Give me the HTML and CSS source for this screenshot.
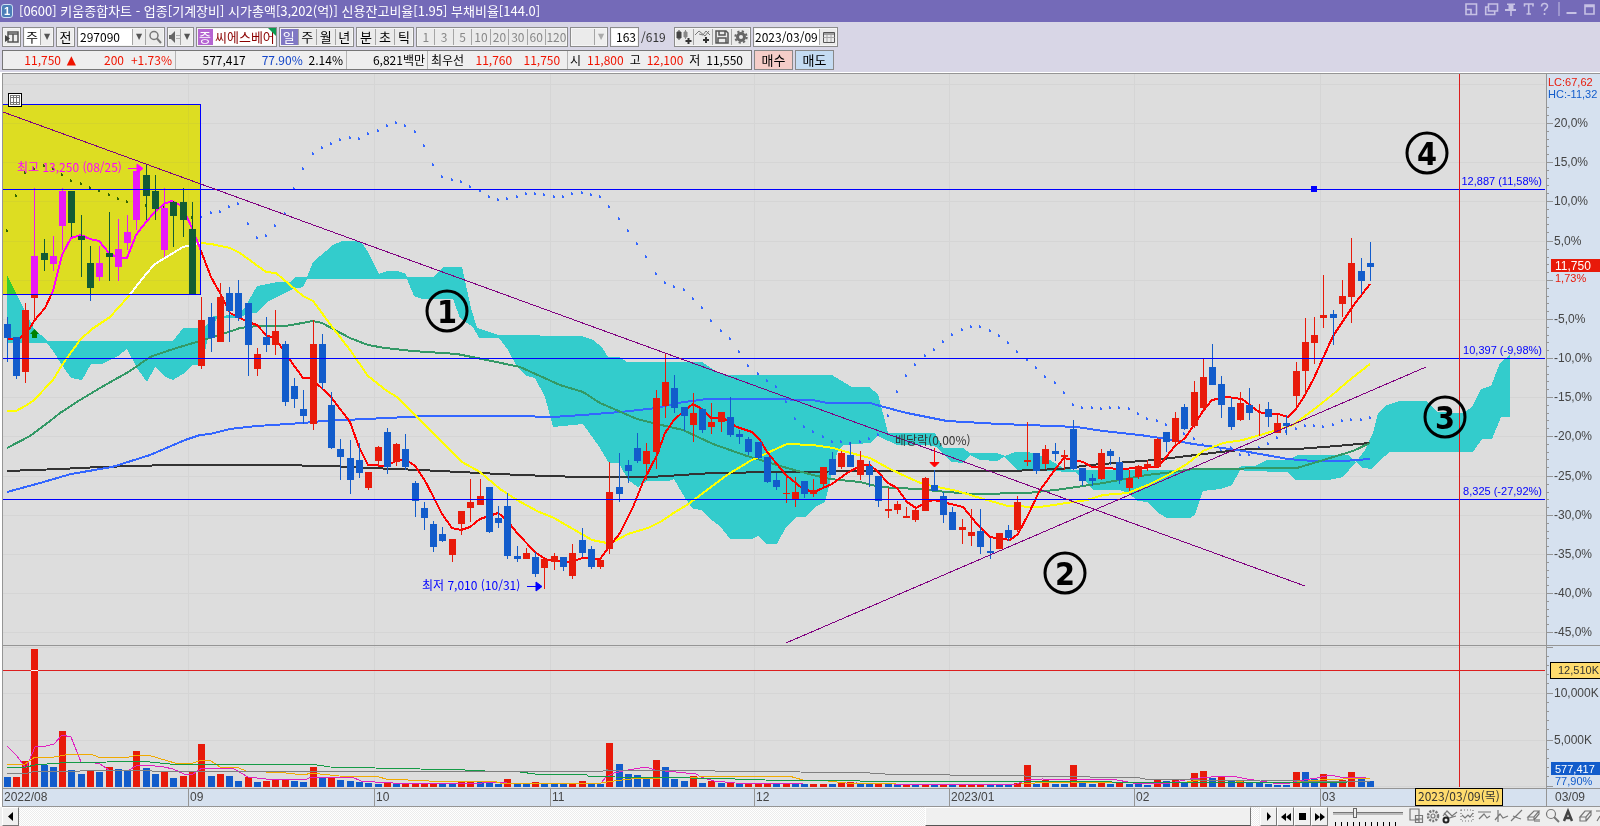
FILE: index.html
```html
<!DOCTYPE html>
<html lang="ko">
<head>
<meta charset="utf-8">
<title>키움종합차트</title>
<link rel="stylesheet" href="styles.css">
</head>
<body>
<header class="titlebar">
  <span class="badge">1</span>
  <h1 class="title">[0600] 키움종합차트 - 업종[기계장비] 시가총액[3,202(억)] 신용잔고비율[1.95] 부채비율[144.0]</h1>
  <svg class="winicons" width="140" height="22" viewBox="0 0 140 22" fill="none" stroke="#c6c1e4" stroke-width="1.6" aria-hidden="true">
    <path d="M6 4h10.500v10.500h-10.500zM6 9.500h5v5"/>
    <path d="M28.500 4h9v7h-9zM28.500 7h-2.800v7.500h9v-3"/>
    <path d="M47 3.500h8v1.500h-1.500v4h2.500v2h-11v-2h3.500v-4h-1.500z" fill="#c6c1e4" stroke="none"/><path d="M51 11v5"/>
    <path d="M64.500 6.500v-2.500h8.500v2.500M68.700 4v10M66.500 14h4.500"/>
    <path d="M81.500 6.500c0-4 6-4 6-.5 0 3-3 2-3 5M84.500 13v2"/>
    <path d="M99 2v14" stroke-width="1"/>
    <path d="M106.500 13h10" stroke-width="2"/>
    <path d="M125 5h9v9h-9zM125 6.500h9"/>
  </svg>
</header>

<form class="toolbar">
  <button class="btn" type="button" aria-label="창"><svg width="14" height="14" viewBox="0 0 14 14"><path d="M3 2h10v10H3zM3 4h10M8 4v8" fill="none" stroke="#555" stroke-width="1.500"/><path d="M0 5v7l5-3.500z" fill="#444"/></svg></button>
  <span class="group mark"><button class="cell white" type="button">주</button><button class="arrow" type="button" aria-label="종목 구분">▼</button></span>
  <button class="btn" type="button">전</button>
  <span class="group code"><input class="field" aria-label="종목코드" value="297090"><button class="arrow" type="button" aria-label="목록">▼</button><button class="cell" type="button" aria-label="검색"><svg width="14" height="14" viewBox="0 0 14 14" fill="none" stroke="#777" stroke-width="1.500"><circle cx="6" cy="5.500" r="4"/><path d="M9 8.500l4 4.500" stroke-width="2"/></svg></button></span>
  <span class="group sound"><button class="cell" type="button" aria-label="소리"><svg width="12" height="12" viewBox="0 0 12 12"><path d="M0 4h3l4-4v12l-4-4H0z" fill="#666"/><path d="M9 4v1M9 7v1M11 4v1M11 7v1" stroke="#777"/></svg></button><button class="arrow" type="button" aria-label="소리 설정">▼</button></span>
  <span class="group stock"><b class="tag">증</b><span class="name">씨에스베어</span></span>
  <span class="group period"><button class="cell on" type="button">일</button><button class="cell" type="button">주</button><button class="cell" type="button">월</button><button class="cell" type="button">년</button></span>
  <span class="group unit"><button class="cell" type="button">분</button><button class="cell" type="button">초</button><button class="cell" type="button">틱</button></span>
  <span class="group mins"><button class="cell" type="button">1</button><button class="cell" type="button">3</button><button class="cell" type="button">5</button><button class="cell" type="button">10</button><button class="cell" type="button">20</button><button class="cell" type="button">30</button><button class="cell" type="button">60</button><button class="cell" type="button">120</button></span>
  <span class="group blank"><span class="cell"></span><button class="arrow off" type="button" aria-label="주기">▼</button></span>
  <span class="group count"><input class="field right" aria-label="봉 개수" value="163"></span>
  <span class="total">/619</span>
  <span class="group tools">
    <button class="cell" type="button" aria-label="차트 추가"><svg width="16" height="14" viewBox="0 0 16 14"><path d="M1 2h4v6H1zM3 0v10" fill="#444" stroke="#444"/><path d="M8 2h3v5H8zM9.500 0v9" fill="#888" stroke="#888"/><path d="M12.500 8v6M9.500 11h6" stroke="#333" stroke-width="2"/></svg></button><button class="cell" type="button" aria-label="지표 추가"><svg width="16" height="14" viewBox="0 0 16 14" fill="none"><path d="M0 5l4-4 6 5 4-5M4 4l4 1 3-4 4 4" stroke="#777"/><path d="M11 7v6M8 10h6" stroke="#333" stroke-width="2"/></svg></button><button class="cell" type="button" aria-label="저장"><svg width="14" height="14" viewBox="0 0 14 14" fill="none" stroke="#555" stroke-width="1.500"><path d="M1 1h10l2 2v10H1zM4 1v4h6V1M3 13V8h8v5"/></svg></button><button class="cell" type="button" aria-label="설정"><svg width="14" height="14" viewBox="0 0 14 14" fill="none" stroke="#666"><circle cx="7" cy="7" r="3.500" stroke-width="3"/><circle cx="7" cy="7" r="5.700" stroke-width="2" stroke-dasharray="2.200 2.280"/></svg></button>
  </span>
  <span class="group date"><input class="field" aria-label="날짜" value="2023/03/09"><button class="cell" type="button" aria-label="달력"><svg width="12" height="12" viewBox="0 0 12 12" fill="none" stroke="#555"><path d="M.5 1.500h11v10H.5zM.5 3h11" /><path d="M.5 6.500h11M4 4v7M8 4v7" stroke="#aaa"/></svg></button></span>
</form>

<section class="quotes">
  <div class="quote">
    <div class="seg seg-a"><span class="up w60">11,750</span><span class="up tri">▲</span><span class="up w48">200</span><span class="up w48">+1.73%</span></div>
    <div class="seg seg-b"><span class="w68">577,417</span><span class="down w60">77.90%</span><span class="w40">2.14%</span></div>
    <div class="seg seg-c"><span>6,821백만</span></div>
    <div class="seg seg-d"><span>최우선</span><span class="up w48">11,760</span><span class="up w48">11,750</span></div>
    <div class="seg seg-e"><span>시</span><span class="up">11,800</span><span>고</span><span class="up">12,100</span><span>저</span><span>11,550</span></div>
  </div>
  <button class="trade buy" type="button">매수</button>
  <button class="trade sell" type="button">매도</button>
</section>

<main class="chart">
  <svg class="plot" viewBox="0 73 1600 734" role="img" aria-label="씨에스베어링 일봉 차트">
    <rect x="0" y="73" width="1600" height="734" fill="#fff"/>
    <rect x="2" y="73" width="1544" height="715" fill="#ddd"/>
    <rect x="1546" y="73" width="54" height="734" fill="#d6e1ef"/>
    <rect x="2" y="788" width="1544" height="18" fill="#d6e1ef"/>
    <g id="grid" class="crisp"></g>
    <g id="cloud" class="crisp"></g>
    <g id="dots" class="crisp"></g>
    <g id="averages" class="line"></g>
    <g id="candles" class="crisp"></g>
    <text x="17" y="172" class="t" fill="#f00">최고 13,250 (08/25)</text>
    <path d="M128 168.500h10M137 164v9l6-4.500z" fill="#f00" stroke="#f00"/>
    <rect class="highlight" x="3" y="104" width="197" height="190"/>
    <path class="crisp" d="M3 104.500h197.500v190h-197.500" fill="none" stroke="#00f"/>
    <path d="M30 334l4.500-5 4.500 5h-2v4h-5v-4z" fill="#008000"/>
    <path class="crisp" d="M3 189.500h1542M3 358.500h1542M3 499.500h1542" stroke="#00f"/>
    <path class="line" d="M3 112L1305 586M786 643L1426 367" fill="none" stroke="#800080"/>
    <path d="M1311 186h6v6h-6z" fill="#00f"/>
    <g class="crisp"><path d="M8.500 93.500h13v13h-13z" fill="#fff" stroke="#000"/><path d="M10.500 95.500h9v9h-9zM10.500 97.500h9M10.500 102.500h9M13.500 95v9M16.500 95v9" fill="none" stroke="#777"/></g>
    <text x="422" y="590" class="t" fill="#00f">최저 7,010 (10/31)</text>
    <path d="M527 586.500h10M536 582v9l6-4.500z" fill="#00f" stroke="#00f"/>
    <text x="895" y="445" class="t" fill="#333">배당락(0,00%)</text>
    <path d="M934.500 448v15M930 462.500h9l-4.500 4.500z" fill="#f00" stroke="#f00"/>
    <g class="n" fill="#00f" text-anchor="end"><text x="1542" y="185">12,887 (11,58%)</text><text x="1542" y="354">10,397 (-9,98%)</text><text x="1542" y="495">8,325 (-27,92%)</text></g>
    <g id="volume" class="crisp"></g>
    <g id="volumeAverages" class="thin"></g>
    <g class="crisp"><path d="M2 645.500h1598M2.500 73v733M2 788.500h1598M2 806.500h1598M1546.500 73v733M2 73.500h1598" stroke="#959595" fill="none"/>
    <path d="M3 670.500h1542M1459.500 74v713" stroke="#dc1e1e"/><path d="M31 670.500h7" stroke="#fff"/></g>
    <g class="mark-no"><circle cx="447" cy="311" r="20"/><text x="447" y="323">1</text><circle cx="1065" cy="573" r="20"/><text x="1065" y="585">2</text><circle cx="1445" cy="417" r="20"/><text x="1445" y="429">3</text><circle cx="1427" cy="153" r="20"/><text x="1427" y="165">4</text></g>
    <g id="axis" class="a" fill="#444"></g>
    <text x="1548" y="86" class="n" fill="#e81a0a">LC:67,62</text>
    <text x="1548" y="98" class="n" fill="#125ccb">HC:-11,32</text>
    <text x="1555" y="282" class="n" fill="#e81a0a">1,73%</text>
    <rect x="1551" y="259" width="49" height="13" fill="#e81a0a"/><text x="1555" y="270" class="a" fill="#fff">11,750</text>
    <text x="1555" y="785" class="n" fill="#125ccb">77,90%</text>
    <rect x="1551" y="762" width="49" height="13" fill="#125ccb"/><text x="1555" y="773" class="n" fill="#fff">577,417</text>
    <rect class="crisp" x="1550.500" y="662.500" width="60" height="16" fill="#ffdc6e" stroke="#000"/><text x="1558" y="674" class="n" fill="#333">12,510K</text>
    <rect class="crisp" x="1415.500" y="788.500" width="87" height="17" fill="#ffdc6e" stroke="#000"/><text x="1418" y="801" class="t" fill="#333">2023/03/09(목)</text>
  </svg>
</main>

<footer class="bottom">
  <button class="sb" type="button" aria-label="왼쪽"><svg width="8" height="9"><path d="M6 0v9L1 4.500z"/></svg></button>
  <div class="track"><div class="thumb"></div></div>
  <button class="sb" type="button" aria-label="오른쪽"><svg width="8" height="9"><path d="M2 0v9l4-4.500z"/></svg></button><button class="sb" type="button" aria-label="뒤로"><svg width="10" height="8"><path d="M5 0v8L0 4zM10 0v8L5 4z"/></svg></button><button class="sb" type="button" aria-label="정지"><svg width="7" height="7"><path d="M0 0h7v7H0z"/></svg></button><button class="sb" type="button" aria-label="앞으로"><svg width="10" height="8"><path d="M0 0v8l5-4zM5 0v8l5-4z"/></svg></button>
  <div class="slide"><input type="range" min="0" max="10" value="3" aria-label="확대"></div>
  <svg class="drawtools" width="192" height="19" viewBox="0 0 192 19" fill="none" stroke="#777" stroke-width="1.200" aria-hidden="true">
    <path d="M2 2h9v11H2zM7.500 8.500h7v7h-7zM11 8.500v7M7.500 12h7" />
    <circle cx="25" cy="9" r="5" stroke-width="2.500" stroke-dasharray="2 1.200"/><circle cx="25" cy="9" r="2"/>
    <path d="M35 9l4-5 5 5 5-4M36 6l5 5 7-2"/><circle cx="38" cy="13" r="2.500" stroke="#222" stroke-width="2"/>
    <path d="M53 3h12v11H53z" stroke-dasharray="1 2"/><path d="M54 8l3 3 3-3 2 2 3-4"/>
    <path d="M70 5h13M71 12l5-5 3 4 3-2"/>
    <path d="M90 3v12M87 13l5-6 3 4 5-2"/>
    <path d="M103 14l11-11M105 9l5 2 3 1"/>
    <path d="M120 10l6-6h5l-5 6zM120 10v3h6v-3M126 13l5-6v-3M127 12v3M129 12v3M131 12v3"/>
    <circle cx="143" cy="7" r="4.500"/><path d="M146 10l5 5" stroke-width="2"/>
    <path d="M156 14l4-10 4 10M157.500 11h5" stroke="#444" stroke-width="2.500"/>
    <path d="M172 10l5-6h6l-5 6zM172 10v4h6v-4M178 14l5-6v-4"/>
    <path d="M188 4h4M192 9l-3 5"/>
  </svg>
</footer>
<script src="chart.js"></script>
</body>
</html>
```
FILE: styles.css
```css
* { box-sizing: border-box; }
body {
  margin: 0;
  min-height: 100vh;
  display: flex;
  flex-direction: column;
  overflow-x: hidden;
  background: #d8d6e6;
  color: #000;
  font: 13px/16px "Noto Sans CJK KR", sans-serif;
}
button, input { font: inherit; color: inherit; margin: 0; padding: 0; border: 0; border-radius: 0; background: none; }
button, .cell, .arrow { display: flex; align-items: center; justify-content: center; white-space: nowrap; }

.titlebar { display: flex; align-items: center; height: 22px; background: #746ab8; color: #fff; padding-left: 1px; }
.badge { width: 12px; height: 14px; border: 1px solid #cfe0f4; border-radius: 3px; background: #4b7fb8; font: bold 11px/12px "Liberation Sans", sans-serif; text-align: center; }
.title { margin: 0 0 0 6px; font-size: 13px; font-weight: 400; line-height: 18px; white-space: nowrap; }
.winicons { margin-left: auto; flex: none; }

.toolbar { display: flex; gap: 2px; padding: 5px 2px 0; margin: 0; }
.btn, .group { height: 20px; flex: none; border: 1px solid #8c8c8c; outline: 1px solid #f5f5f5; outline-offset: -2px; background: #eee; overflow: hidden; }
.btn { width: 19px; }
.group { display: flex; }
.cell { flex: 1; min-width: 0; background: #ebebeb; border-left: 1px solid #a5a5a5; }
.cell:first-child { border-left: 0; }
.white { background: #fff; }
.arrow { width: 13px; flex: none; border-left: 1px solid #a5a5a5; font: 8px/10px "DejaVu Sans", sans-serif; color: #555; background: #eee; }
.off { color: #aaa; }
.field { flex: 1; width: 0; min-width: 0; padding: 0 2px; background: #fff; font-size: 12px; }
.right { text-align: right; }
.mark { width: 31px; }
.code { width: 88px; }
.code .cell { flex: 0 0 19px; }
.sound { width: 27px; }
.stock { width: 81px; background: #fff; position: relative; color: #8b0000; }
.stock::after { content: ""; position: absolute; right: 0; top: 0; border: 4px solid; border-color: #0a9a50 #0a9a50 transparent transparent; }
.tag { width: 16px; background: #b565d2; color: #fff; font-weight: 400; text-align: center; line-height: 18px; }
.name { padding-left: 2px; line-height: 18px; white-space: nowrap; }
.period { width: 75px; }
.on { background: #8078c4; color: #fff; }
.unit { width: 58px; }
.mins { width: 152px; color: #888; font-size: 12px; }
.mins .cell:last-child { flex: 0 0 22px; }
.blank { width: 38px; }
.count { width: 29px; }
.total { width: 31px; flex: none; font-size: 12px; line-height: 20px; color: #333; }
.tools { width: 77px; }
.date { width: 85px; }
.date .field { padding: 0 0 0 1px; }
.date .cell { flex: 0 0 18px; }

.quotes { display: flex; gap: 2px; padding: 3px 2px 2px; border-bottom: 1px solid #fff; }
.quote { display: flex; flex: none; width: 750px; height: 20px; border: 1px solid #777; background: #efefef; font-size: 12px; line-height: 18px; white-space: nowrap; }
.seg { display: flex; border-left: 1px solid #b5b5b5; padding: 0 3px; }
.seg:first-child { border-left: 0; padding-left: 0; }
.seg-a { width: 172px; }
.seg-b { width: 171px; }
.seg-c { width: 81px; justify-content: flex-end; padding: 0 2px; }
.seg-d { width: 140px; }
.seg-e { flex: 1; padding: 0 8px 0 2px; justify-content: space-between; }
.up { color: #f01400; }
.down { color: #1446c8; }
.w40 { width: 41px; text-align: right; }
.w48 { width: 48px; text-align: right; }
.w60 { width: 58px; text-align: right; }
.w68 { width: 68px; text-align: right; }
.tri { width: 15px; font: 12px/18px "DejaVu Sans", sans-serif; text-align: right; }
.trade { width: 39px; height: 20px; border: 1px solid #888; }
.buy { background: #f5cdc8; }
.sell { background: #c5dcf2; }

.chart { flex: none; }
.plot { display: block; width: 100%; height: auto; }
.crisp, .line, .thin { shape-rendering: crispEdges; }
.line polyline { fill: none; stroke-width: 2; }
.thin polyline { fill: none; stroke-width: 1; }
.t { font: 12px "Noto Sans CJK KR", sans-serif; }
.n { font: 11px "Liberation Sans", sans-serif; }
.a { font: 12px "Liberation Sans", sans-serif; }
.highlight { fill: #00f; mix-blend-mode: difference; }
.mark-no circle { fill: none; stroke: #000; stroke-width: 3; }
.mark-no text { font: bold 32px "DejaVu Sans Condensed", "DejaVu Sans", sans-serif; text-anchor: middle; }

.bottom { display: flex; height: 19px; padding-left: 2px; background: #eee; }
.sb { width: 17px; height: 19px; flex: none; background: #f0f0f0; border: 1px solid; border-color: #fff #777 #777 #fff; }
.track { flex: 1; display: flex; margin-right: 1px; background: repeating-conic-gradient(#fff 0 25%, #ececec 0 50%) 0 0 / 2px 2px; }
.thumb { width: 26.300%; margin-left: auto; margin-right: 8px; background: #f0f0f0; border: 1px solid; border-color: #fff #777 #555 #fff; }
.slide { width: 80px; padding: 0 5px; flex: none; background: repeating-linear-gradient(90deg, #000 0 1px, transparent 1px 6px) 7px 15px / 66px 4px no-repeat; }
.slide input { display: block; width: 100%; height: 12px; appearance: none; }
.slide input::-webkit-slider-runnable-track { height: 3px; background: #bbb; border-top: 1px solid #777; }
.slide input::-webkit-slider-thumb { appearance: none; width: 4px; height: 10px; margin-top: -5px; border: 1px solid #666; background: #eee; }
.drawtools { flex: none; }
```
FILE: chart.js
```js
const NS = "http://www.w3.org/2000/svg";
const RED = "#e81a0a", BLUE = "#125ccb";
const byId = (id) => document.getElementById(id);
const add = (parent, tag, attrs, text) => {
  const node = document.createElementNS(NS, tag);
  for (const key in attrs) node.setAttribute(key, attrs[key]);
  if (text) node.textContent = text;
  parent.appendChild(node);
};
const xAt = (i) => Math.floor(7.05 + 9.274 * i);

// colour, wick top, body top, body bottom, wick bottom
const candles = `b 317 324 338 362|b 337 337 376 379|r 303 310 372 383|r 188 256 298 320|b 239 253 260 271|r 236 256 264 271|r 188 191 226 250|b 191 191 223 237|b 215 236 240 277|b 246 263 288 301|r 246 263 277 281|b 212 253 257 281|r 219 249 267 281|r 215 232 243 250|r 171 171 220 230|b 165 175 196 220|b 175 191 209 220|r 188 208 250 257|b 201 202 216 247|b 188 202 220 237|b 202 229 295 295|r 297 320 366 369|b 303 317 338 352|r 283 297 342 342|b 287 293 311 342|b 280 293 318 321|b 303 303 345 376|r 348 354 369 376|b 317 337 345 352|r 310 331 345 355|b 341 344 402 406|b 378 386 399 408|b 390 409 416 424|r 320 344 424 430|b 334 344 383 389|b 392 405 448 449|b 439 449 457 480|b 440 458 480 494|b 443 460 473 478|r 472 472 488 490|r 446 447 461 466|b 428 432 467 474|r 443 444 462 466|b 434 449 467 470|b 481 483 501 517|b 502 508 518 530|b 521 524 547 552|b 527 534 541 542|r 539 539 555 562|r 511 511 524 535|r 479 502 508 522|r 479 496 505 505|b 487 487 532 533|b 506 518 523 528|b 493 506 556 559|b 546 556 559 562|r 548 553 559 559|b 552 557 574 577|r 559 559 568 589|r 553 556 562 570|b 557 557 567 571|r 544 553 576 579|b 528 540 553 557|b 546 549 567 569|r 557 560 567 569|r 462 492 549 554|b 453 487 494 502|b 460 465 471 483|b 433 448 461 463|r 443 451 464 480|r 390 398 452 469|r 353 382 406 418|b 375 388 408 413|b 407 407 416 431|r 393 413 425 442|b 408 409 430 433|r 403 422 427 434|r 412 412 422 432|b 397 417 435 437|b 430 434 437 444|b 437 439 452 455|b 442 442 458 459|b 457 457 482 483|b 473 480 487 490|r 475 493 494 503|r 477 492 499 507|b 481 481 494 498|r 479 490 494 497|r 467 467 484 487|b 452 459 475 475|r 451 453 467 469|b 442 455 467 467|r 451 460 475 480|b 461 466 475 487|b 476 476 501 507|r 488 509 511 518|r 501 504 510 514|r 507 516 518 518|r 509 510 520 522|r 477 478 511 511|b 470 485 491 491|b 492 496 515 523|b 507 512 530 530|r 519 527 530 544|r 509 532 536 546|b 509 531 547 554|b 538 551 553 559|r 533 533 549 549|b 525 530 538 541|r 496 502 530 532|r 422 460 462 466|b 453 453 471 474|r 445 449 464 469|b 443 451 454 461|r 450 455 457 470|b 420 429 469 470|b 468 468 481 486|b 474 478 481 486|r 449 453 479 480|b 449 451 456 465|b 457 462 480 484|r 470 478 488 491|r 465 466 477 479|r 460 464 467 471|r 438 439 467 467|b 432 432 442 452|r 412 418 442 446|b 404 407 429 430|r 381 392 426 428|r 359 377 408 411|b 344 367 385 385|b 376 384 405 418|b 398 407 427 430|r 392 403 420 421|b 388 405 413 420|r 404 404 404 436|b 402 409 417 427|r 415 423 433 433|b 415 423 426 435|r 362 371 396 406|r 318 342 371 395|r 317 335 343 364|r 275 315 318 328|b 310 314 318 345|r 280 296 304 317|r 238 263 297 323|b 258 271 281 294|b 242 263 267 281`.split("|");

candles.forEach((row, i) => {
  const [c, ...v] = row.split(" ");
  const [high, top, bottom, low] = v.map(Number);
  const fill = c === "r" ? RED : BLUE;
  add(byId("candles"), "rect", { x: xAt(i), y: high, width: 1, height: low - high, fill });
  add(byId("candles"), "rect", { x: xAt(i) - 3, y: top, width: 7, height: bottom - top, fill });
});

const dots = [230,195,172,168,165,168,174,180,183,187,190,194,198,201,204,205,206,207,205,212,217,216,212,211,206,203,223,237,235,225,213,188,168,153,147,143,139,137,138,133,130,125,122,125,131,145,164,176,179,181,186,190,196,199,198,196,193,193,194,196,196,193,192,194,196,206,218,230,243,256,273,282,286,289,298,307,320,330,338,351,365,373,380,386,401,418,426,431,436,441,441,443,441,438,434,415,391,375,364,355,349,341,334,329,326,326,330,335,342,351,359,367,376,382,392,404,407,407,408,407,407,408,413,418,420,424,425,433,438,444,446,450,447,454,454,447,443,437,431,428,425,425,426,424,420,419,419,417];
dots.forEach((y, i) => add(byId("dots"), "path", { d: `M${xAt(i) - 1} ${y - 1}h1v1h1v2h-2z`, fill: "#3366ff" }));

const cloudTop = "7,275 34,329 48,341 173,341 183,328 200,328 207,325 213,316 238,315 245,307 257,286 277,282 290,282 295,277 307,277 313,262 333,245 342,241 357,241 362,243 368,252 379,274 387,271 397,271 406,274 407,277 434,277 443,267 462,267 471,308 477,328 498,335 582,336 593,340 602,347 608,357 619,357 627,362 702,362 717,372 727,375 832,375 852,387 869,387 878,394 888,433 935,433 943,448 963,448 970,453 997,453 1005,456 1015,452 1028,452 1045,457 1063,468 1073,470 1233,470 1242,466 1255,466 1267,460 1288,460 1298,455 1348,455 1356,462 1365,450 1373,433 1378,413 1387,405 1400,401 1427,401 1437,412 1463,413 1472,407 1481,389 1491,386 1500,363 1510,355";
const cloudBottom = "1510,417 1501,417 1492,439 1482,439 1473,452 1390,452 1380,460 1372,469 1363,468 1356,462 1343,477 1328,480 1296,480 1287,472 1247,471 1240,470 1232,485 1220,489 1203,491 1195,515 1190,518 1167,518 1157,512 1147,502 1138,501 1128,493 1120,490 1093,490 1087,482 1075,472 1017,470 1004,457 997,461 980,460 970,455 963,463 952,462 943,454 937,447 927,445 897,445 878,436 870,443 843,445 837,453 825,502 815,507 805,517 797,517 786,527 777,544 767,544 758,536 752,539 730,539 720,526 710,519 702,510 693,509 685,498 674,479 668,481 647,481 638,487 628,480 619,463 609,463 600,448 583,424 553,427 545,397 535,378 527,376 517,367 508,350 499,338 479,338 473,327 460,318 453,299 422,299 414,296 407,279 307,279 303,287 293,289 283,294 267,302 257,313 247,314 238,318 217,318 208,337 205,352 200,365 193,365 183,374 173,380 166,377 155,367 147,382 137,368 127,349 118,356 102,364 91,364 82,380 71,378 62,365 53,351 47,343 7,343";
add(byId("cloud"), "polygon", { points: cloudTop + " " + cloudBottom, fill: "#33cccc" });

const averages = [
  ["#333333", "7,471 60,469 100,467 170,465 273,465 330,466 370,468 420,470 480,473 520,475 580,477 650,477 713,473 780,472 880,471 1010,471 1060,469 1090,465 1155,460 1220,452 1250,449 1297,449 1337,446 1370,443"],
  ["#3366ff", "7,492 40,483 71,474 112,467 150,455 185,440 200,435 210,434 230,429 257,426 303,423 323,421 387,418 427,416 517,416 553,417 583,415 620,412 657,408 677,403 707,399 767,399 813,400 827,403 870,403 880,406 907,413 947,421 1000,424 1027,425 1077,427 1103,431 1140,435 1167,439 1193,444 1237,450 1260,454 1288,459 1313,461 1343,461 1370,459"],
  ["#339966", "7,448 30,436 50,421 60,413 80,400 100,388 130,371 150,357 170,350 200,341 220,335 240,328 257,326 285,326 297,324 313,321 322,323 350,338 368,345 385,348 413,351 457,354 487,360 520,367 560,385 583,392 600,403 637,419 657,424 683,430 713,444 747,456 787,468 813,475 830,479 860,482 880,487 917,489 947,492 973,494 1028,493 1063,489 1103,483 1147,475 1173,472 1193,469 1297,468 1330,458 1353,451 1370,443"],
  ["#ffff00", "7,411 16,411 27,405 34,400 53,380 62,365 80,340 92,329 110,317 128,297 146,274 155,264 183,247 201,243 211,244 230,248 240,253 266,272 276,273 303,296 313,301 333,328 350,350 368,376 387,391 397,397 418,418 462,462 480,472 500,489 517,500 537,511 554,518 573,529 592,540 607,543 615,541 628,534 648,528 662,521 675,512 687,505 707,490 727,475 750,461 767,453 787,444 813,445 833,448 847,452 870,458 888,468 907,477 923,484 957,491 967,494 987,500 1008,506 1040,507 1060,504 1087,500 1103,495 1128,493 1150,484 1170,474 1187,464 1203,451 1223,443 1243,440 1277,430 1293,425 1317,407 1337,391 1347,382 1370,364"],
  ["#ff0000", "7,339 20,338 30,328 34,321 45,308 53,291 62,255 71,238 81,235 90,239 99,241 109,253 118,258 127,258 136,235 146,222 155,212 164,204 172,201 182,206 192,228 201,251 211,277 220,293 230,313 238,317 248,322 257,325 266,335 276,339 285,353 303,378 311,378 331,397 350,422 359,447 368,465 387,466 397,460 408,461 415,466 424,479 433,496 442,514 452,528 461,530 470,527 480,519 489,516 498,513 507,520 517,533 535,552 545,559 554,561 572,562 582,558 600,559 609,547 620,533 633,507 643,482 657,455 665,433 674,420 684,411 693,404 702,409 711,418 723,418 737,427 752,432 760,440 767,452 786,475 803,489 814,492 832,484 847,473 862,465 870,465 878,472 888,483 897,488 907,502 916,508 927,502 934,500 963,507 977,524 990,537 1010,540 1018,534 1028,515 1040,490 1060,463 1064,458 1083,462 1092,467 1120,469 1158,467 1175,446 1185,438 1194,425 1203,411 1212,400 1227,397 1242,399 1259,412 1268,414 1278,414 1288,417 1296,409 1305,395 1314,378 1333,336 1353,306 1370,284"]
];
averages.forEach(([stroke, points]) => add(byId("averages"), "polyline", { points, stroke }));

const volume = "b777 r777 r761 r649 b765 b767 r731 b770 b774 r770 b772 r767 b769 b770 r751 b768 b774 r772 b778 r776 r772 r744 b776 r774 b776 b781 r777 b782 r781 r779 r779 b781 b782 r767 b777 r777 b780 b781 b782 b783 b784 r783 b784 r784 r784 r784 r784 b784 b784 r782 r782 b782 b783 b784 r779 b784 b784 r782 b784 b784 b784 r784 r781 b784 b784 r743 b764 b774 b775 b779 r760 b767 b779 b781 r776 b783 r781 b783 r783 b784 r784 r784 r784 b784 r784 b784 b784 r784 r784 b784 r783 r782 b784 b784 r784 b784 b785 r785 b785 r785 b785 r785 b785 r785 r785 r785 b785 b785 b785 r783 r765 b784 r780 b784 b784 r765 b783 b784 r782 b784 r783 b784 b784 b785 r780 b781 r780 b783 r773 r771 b778 r776 b781 r781 b783 b783 b784 b785 b785 r772 b772 b779 r774 b783 r780 r772 b779 b781".split(" ");
volume.forEach((v, i) => {
  const y = Number(v.slice(1));
  add(byId("volume"), "rect", { x: xAt(i) - 3, y, width: 7, height: 787 - y, fill: v[0] === "r" ? RED : BLUE });
});

const volumeAverages = [
  ["#e020c0", "7,746 16,755 26,768 35,747 46,746 54,744 62,735 71,737 81,762 95,763 100,764 109,770 129,770 136,766 146,765 164,767 173,769 184,774 193,774 202,768 211,769 221,768 234,769 248,777 275,780 286,779 304,780 312,777 352,777 361,781 375,782 393,783 482,783 493,782 507,783 601,783 606,777 614,773 628,770 646,767 655,770 696,774 701,777 714,781 735,783 803,784 846,784 856,783 931,785 1017,784 1026,780 1042,779 1089,780 1112,779 1133,783 1147,784 1170,783 1190,779 1200,778 1222,776 1237,777 1247,779 1273,783 1287,784 1297,781 1317,778 1330,775 1340,777 1366,777"],
  ["#f0aa00", "7,764 25,764 35,757 54,757 71,754 91,754 98,757 129,757 137,755 148,755 168,761 175,763 193,763 202,760 211,761 220,767 239,768 246,771 286,773 304,775 311,773 339,776 379,777 386,779 429,781 493,781 500,783 601,783 614,781 631,779 660,778 699,777 710,776 789,776 803,780 828,781 846,783 896,784 1021,784 1035,783 1071,782 1187,782 1200,780 1230,780 1243,782 1297,782 1320,780 1343,779 1350,778 1370,778"],
  ["#149b46", "7,768 26,767 35,765 60,763 107,762 137,761 150,762 170,764 260,764 317,765 330,767 375,768 420,769 465,770 485,771 520,772 535,774 585,774 590,777 610,776 615,777 690,778 735,779 765,780 860,781 1112,782 1340,783 1355,781 1370,782"],
  ["#808080", "7,773 28,773 36,771 80,771 87,770 150,770 152,771 603,771 606,770 715,771 800,772 870,773 885,774 945,774 950,775 1020,775 1025,776 1088,776 1090,777 1135,777 1145,779 1190,779 1200,780 1260,780 1300,781 1370,782"]
];
volumeAverages.forEach(([stroke, points]) => add(byId("volumeAverages"), "polyline", { points, stroke }));

const grid = byId("grid"), axis = byId("axis");
const rule = (parent, d, stroke) => add(parent, "path", { d, stroke, class: "crisp" });
const percents = [[84, ""], [123, "20,0%"], [162, "15,0%"], [201, "10,0%"], [241, "5,0%"], [280, ""], [319, "-5,0%"], [358, "-10,0%"], [397, "-15,0%"], [436, "-20,0%"], [476, "-25,0%"], [515, "-30,0%"], [554, "-35,0%"], [593, "-40,0%"], [632, "-45,0%"]];
percents.forEach(([y, label]) => {
  rule(grid, `M3 ${y}.5h1542`, "#d5d5d5");
  if (y > 84) rule(axis, `M1547 ${y}.5h6`, "#959595");
  if (label) add(axis, "text", { x: 1554, y: y + 4 }, label);
  for (let k = 1; k < 5 && y < 632; k++) if (y + k * 8 > 100) rule(axis, `M1547 ${y + Math.round(k * 7.8)}.5h2`, "#959595");
});
[[647, ""], [693, "10,000K"], [740, "5,000K"], [786, ""]].forEach(([y, label]) => {
  rule(grid, `M3 ${y}.5h1542`, "#d5d5d5");
  rule(axis, `M1547 ${y}.5h6`, "#959595");
  if (label) add(axis, "text", { x: 1554, y: y + 4 }, label);
  for (let k = 1; k < 5 && y < 786; k++) rule(axis, `M1547 ${y + k * 9}.5h2`, "#959595");
});
[[2, "2022/08"], [188, "09"], [374, "10"], [550, "11"], [754, "12"], [949, "2023/01"], [1134, "02"], [1320, "03"], [1553, "03/09"]].forEach(([x, label]) => {
  if (x > 2 && x < 1500) {
    rule(grid, `M${x}.5 74v714`, "#d5d5d5");
    rule(axis, `M${x}.5 788v18`, "#959595");
  }
  add(axis, "text", { x: x + 2, y: 801 }, label);
});
```
